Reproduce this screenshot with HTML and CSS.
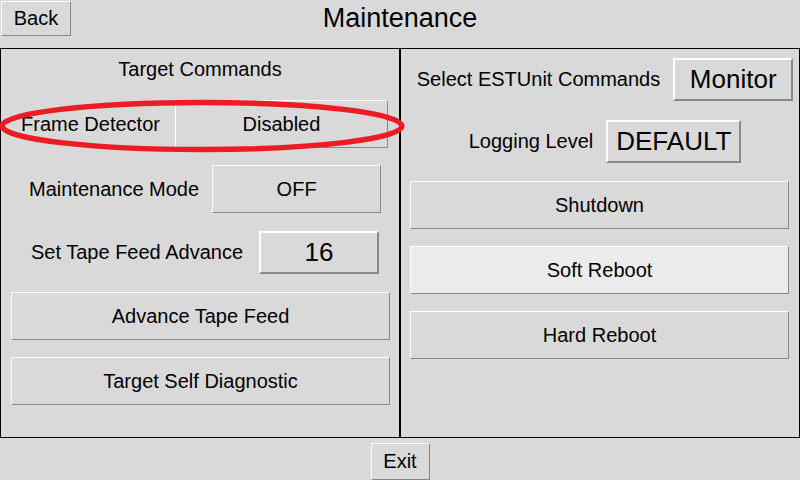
FILE: index.html
```html
<!DOCTYPE html>
<html lang="en">
<head>
    <meta charset="UTF-8">
    <meta name="viewport" content="width=device-width, initial-scale=1.0">
    <title>Maintenance</title>
    <link rel="stylesheet" href="styles.css">
</head>
<body>
    <header class="topbar">
        <button class="btn btn-back">Back</button>
        <h1 class="title">Maintenance</h1>
    </header>

    <main class="panels">
        <section class="panel panel-left">
            <div class="panel-heading">Target Commands</div>

            <div class="field-row row-frame">
                <span class="field-label">Frame Detector</span>
                <button class="btn btn-frame">Disabled</button>
            </div>

            <div class="field-row row-mode">
                <span class="field-label">Maintenance Mode</span>
                <button class="btn btn-mode">OFF</button>
            </div>

            <div class="field-row row-tape">
                <span class="field-label">Set Tape Feed Advance</span>
                <button class="btn btn-big btn-tape">16</button>
            </div>

            <button class="btn btn-wide">Advance Tape Feed</button>
            <button class="btn btn-wide">Target Self Diagnostic</button>

            <!-- highlight drawn over the frame detector row -->
            <svg class="highlight" width="412" height="110" viewBox="0 0 412 110">
                <ellipse cx="202" cy="77" rx="200" ry="23.5" fill="none" stroke="#ed1c24" stroke-width="5.5" />
            </svg>
        </section>

        <section class="panel panel-right">
            <div class="field-row row-select">
                <span class="field-label">Select ESTUnit Commands</span>
                <button class="btn btn-big btn-monitor">Monitor</button>
            </div>

            <div class="field-row row-logging">
                <span class="field-label">Logging Level</span>
                <button class="btn btn-big btn-default">DEFAULT</button>
            </div>

            <button class="btn btn-wide">Shutdown</button>
            <button class="btn btn-wide btn-active">Soft Reboot</button>
            <button class="btn btn-wide">Hard Reboot</button>
        </section>
    </main>

    <footer class="bottombar">
        <button class="btn btn-exit">Exit</button>
    </footer>
</body>
</html>
```

FILE: styles.css
```css
* {
    box-sizing: border-box;
}

body {
    margin: 0;
    width: 800px;
    height: 480px;
    overflow: hidden;
    background: #d9d9d9;
    color: #000;
    font-family: "Liberation Sans", Arial, sans-serif;
    font-size: 20px;
}

.topbar {
    height: 48px;
    display: grid;
    grid-template-columns: 1fr auto 1fr;
    align-items: start;
}

.title {
    margin: 0;
    padding-top: 3px;
    font-size: 27px;
    font-weight: normal;
    line-height: 31px;
}

.btn {
    font: inherit;
    color: #000;
    background: #d9d9d9;
    padding: 0;
    border: 1px solid;
    border-color: #fff #888 #888 #fff;
    display: flex;
    align-items: center;
    justify-content: center;
    flex-shrink: 0;
}

.btn-big {
    border-width: 2px;
    font-size: 26px;
}

.btn-active {
    background: #ececec;
}

.btn-back {
    justify-self: start;
    margin: 1px 0 0 1px;
    width: 70px;
    height: 35px;
}

.panels {
    display: flex;
    height: 390px;
}

.panel {
    position: relative;
    width: 400px;
    border: 1px solid #000;
    display: flex;
    flex-direction: column;
}

.panel-heading {
    margin-top: 9px;
    text-align: center;
    line-height: 23px;
}

.field-row {
    display: flex;
    align-items: center;
    gap: 13px;
}

.field-label {
    white-space: nowrap;
}

/* left panel rows */
.row-frame {
    margin-top: 19px;
    padding-left: 20px;
    gap: 15px;
}

.btn-frame {
    width: 213px;
    height: 48px;
}

.row-mode {
    margin-top: 17px;
    padding-left: 28px;
}

.btn-mode {
    width: 169px;
    height: 48px;
}

.row-tape {
    margin-top: 18px;
    padding-left: 30px;
    gap: 16px;
}

.btn-tape {
    width: 120px;
    height: 43px;
}

.btn-wide {
    width: 379px;
    height: 48px;
    margin-top: 17px;
    margin-left: 10px;
}

.row-tape + .btn-wide {
    margin-top: 18px;
}

.highlight {
    position: absolute;
    left: -1px;
    top: 0;
    overflow: visible;
    z-index: 2;
    pointer-events: none;
}

/* right panel rows */
.row-select,
.row-logging {
    justify-content: center;
    padding-left: 10px;
}

.row-select {
    margin-top: 9px;
}

.btn-monitor {
    width: 120px;
    height: 43px;
}

.row-logging {
    margin-top: 19px;
}

.btn-default {
    width: 135px;
    height: 43px;
}

.panel-right .btn-wide {
    margin-left: 9px;
}

.row-logging + .btn-wide {
    margin-top: 18px;
}

.bottombar {
    display: flex;
    justify-content: center;
    padding-top: 5px;
}

.btn-exit {
    width: 59px;
    height: 37px;
}
```
